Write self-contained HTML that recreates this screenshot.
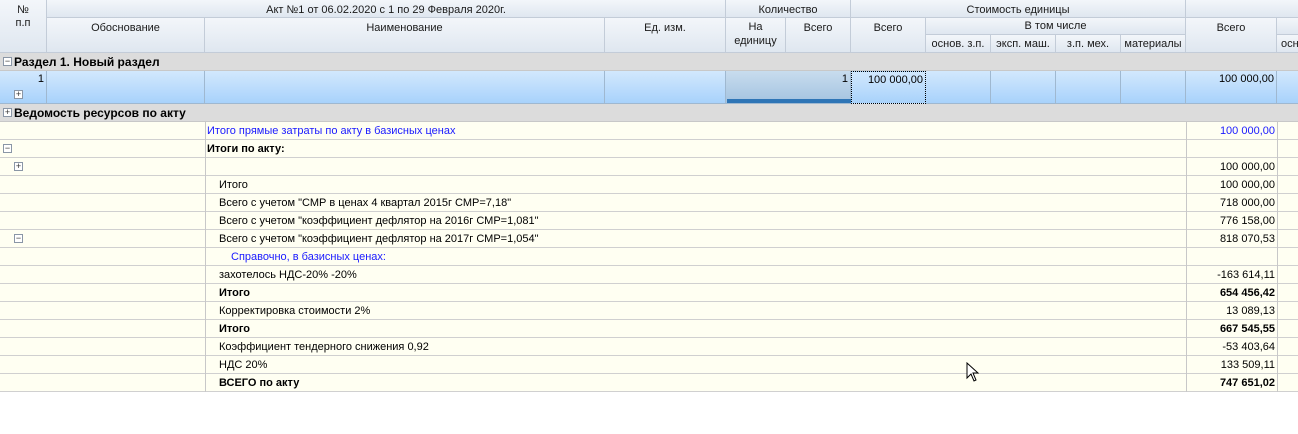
<!DOCTYPE html><html><head><meta charset="utf-8"><style>
body{margin:0;width:1298px;height:434px;background:#fff;font-family:"Liberation Sans","DejaVu Sans",sans-serif;font-size:11px;color:#000;position:relative;overflow:hidden}
div{position:absolute;box-sizing:border-box;white-space:nowrap}
.h{background:linear-gradient(#f3f6fa,#dfe7f0);border-right:1px solid #c3ccd8;border-bottom:1px solid #c3ccd8;text-align:center;padding-top:4px;color:#1a1a1a}
.sec{background:#dcdcdc;border-bottom:1px solid #c8c8c8;font-weight:bold;font-size:12px;padding:2px 0 0 14px;height:18px;left:0;width:1298px}
.c{background:linear-gradient(#d2e8fd,#a8d2fb);border-right:1px solid #9fb8d0;border-bottom:1px solid #9fb8d0;height:33px;top:71px;text-align:right;padding:2px 2px 0 0}
.r{left:0;width:1298px;height:18px;background:#fffff2;border-bottom:1px solid #d0d0d0}
.r .t{left:219px;top:3px}
.r .v{right:23px;top:3px;text-align:right}
.vl{top:0;bottom:0;width:1px;background:#c8c8c8}
.b{font-weight:bold}
.box{width:9px;height:9px;border:1px solid #8a96a6;background:#fff;font-size:9px;line-height:7px;text-align:center;color:#333}
</style></head><body>
<div class="h" style="left:0;top:0;width:47px;height:53px;line-height:13px">№<br>п.п</div>
<div class="h" style="left:47px;top:0;width:679px;height:18px">Акт №1 от 06.02.2020 с 1 по 29 Февраля 2020г.</div>
<div class="h" style="left:47px;top:18px;width:158px;height:35px">Обоснование</div>
<div class="h" style="left:205px;top:18px;width:400px;height:35px">Наименование</div>
<div class="h" style="left:605px;top:18px;width:121px;height:35px">Ед. изм.</div>
<div class="h" style="left:726px;top:0;width:125px;height:18px">Количество</div>
<div class="h" style="left:726px;top:18px;width:60px;height:35px;line-height:14px;padding-top:2px">На<br>единицу</div>
<div class="h" style="left:786px;top:18px;width:65px;height:35px">Всего</div>
<div class="h" style="left:851px;top:0;width:335px;height:18px">Стоимость единицы</div>
<div class="h" style="left:851px;top:18px;width:75px;height:35px">Всего</div>
<div class="h" style="left:926px;top:18px;width:260px;height:17px;padding-top:2px">В том числе</div>
<div class="h" style="left:926px;top:35px;width:65px;height:18px;padding-top:3px">основ. з.п.</div>
<div class="h" style="left:991px;top:35px;width:65px;height:18px;padding-top:3px">эксп. маш.</div>
<div class="h" style="left:1056px;top:35px;width:65px;height:18px;padding-top:3px">з.п. мех.</div>
<div class="h" style="left:1121px;top:35px;width:65px;height:18px;padding-top:3px">материалы</div>
<div class="h" style="left:1186px;top:0;width:112px;height:18px;border-right:0"></div>
<div class="h" style="left:1186px;top:18px;width:91px;height:35px">Всего</div>
<div class="h" style="left:1277px;top:18px;width:21px;height:17px;border-right:0"></div>
<div class="h" style="left:1277px;top:35px;width:21px;height:18px;text-align:left;padding-left:4px;padding-top:3px;border-right:0;overflow:hidden">осн</div>
<div class="sec" style="top:53px">Раздел 1. Новый раздел</div>
<div class="box" style="left:3px;top:57px">−</div>
<div class="c" style="left:0;width:47px">1</div>
<div class="box" style="left:14px;top:90px">+</div>
<div class="c" style="left:47px;width:158px"></div>
<div class="c" style="left:205px;width:400px"></div>
<div class="c" style="left:605px;width:121px"></div>
<div class="c" style="left:726px;width:125px;background:linear-gradient(#c8dcee,#a3c3e0)">1</div>
<div style="left:727px;top:99px;width:124px;height:4px;background:#2e75b6"></div>
<div class="c" style="left:851px;width:75px;border:1px dotted #000">100 000,00</div>
<div class="c" style="left:926px;width:65px"></div>
<div class="c" style="left:991px;width:65px"></div>
<div class="c" style="left:1056px;width:65px"></div>
<div class="c" style="left:1121px;width:65px"></div>
<div class="c" style="left:1186px;width:91px">100 000,00</div>
<div class="c" style="left:1277px;width:21px;border-right:0"></div>
<div class="sec" style="top:104px">Ведомость ресурсов по акту</div>
<div class="box" style="left:3px;top:108px">+</div>
<div class="r" style="top:122px"><div class="t" style="left:207px;color:#1a1aff">Итого прямые затраты по акту в базисных ценах</div><div class="v" style="color:#1a1aff">100 000,00</div></div>
<div class="r" style="top:140px"><div class="t b" style="left:207px">Итоги по акту:</div></div>
<div class="box" style="left:3px;top:144px">−</div>
<div class="r" style="top:158px"><div class="v">100 000,00</div></div>
<div class="box" style="left:14px;top:162px">+</div>
<div class="r" style="top:176px"><div class="t">Итого</div><div class="v">100 000,00</div></div>
<div class="r" style="top:194px"><div class="t">Всего с учетом "СМР в ценах 4 квартал 2015г СМР=7,18"</div><div class="v">718 000,00</div></div>
<div class="r" style="top:212px"><div class="t">Всего с учетом "коэффициент дефлятор на 2016г СМР=1,081"</div><div class="v">776 158,00</div></div>
<div class="r" style="top:230px"><div class="t">Всего с учетом "коэффициент дефлятор на 2017г СМР=1,054"</div><div class="v">818 070,53</div></div>
<div class="box" style="left:14px;top:234px">−</div>
<div class="r" style="top:248px"><div class="t" style="left:231px;color:#1a1aff">Справочно, в базисных ценах:</div></div>
<div class="r" style="top:266px"><div class="t">захотелось НДС-20% -20%</div><div class="v">-163 614,11</div></div>
<div class="r" style="top:284px"><div class="t b">Итого</div><div class="v b">654 456,42</div></div>
<div class="r" style="top:302px"><div class="t">Корректировка стоимости 2%</div><div class="v">13 089,13</div></div>
<div class="r" style="top:320px"><div class="t b">Итого</div><div class="v b">667 545,55</div></div>
<div class="r" style="top:338px"><div class="t">Коэффициент тендерного снижения 0,92</div><div class="v">-53 403,64</div></div>
<div class="r" style="top:356px"><div class="t">НДС 20%</div><div class="v">133 509,11</div></div>
<div class="r" style="top:374px"><div class="t b">ВСЕГО по акту</div><div class="v b">747 651,02</div></div>
<div class="vl" style="left:205px;top:122px;height:270px;bottom:auto"></div>
<div class="vl" style="left:1186px;top:122px;height:270px;bottom:auto"></div>
<div class="vl" style="left:1277px;top:122px;height:270px;bottom:auto"></div>
<svg style="position:absolute;left:966px;top:362px" width="14" height="20" viewBox="0 0 14 20"><path d="M1 1 L1 16 L5 12 L8 19 L10 18 L7 11 L12 11 Z" fill="#fff" stroke="#000" stroke-width="1"/></svg>
</body></html>
